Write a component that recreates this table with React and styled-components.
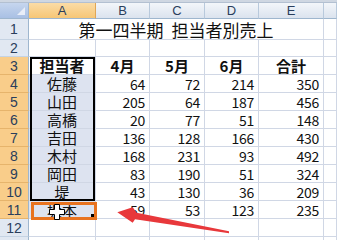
import React from "react";
import styled, { createGlobalStyle } from "styled-components";

const GlobalStyle = createGlobalStyle`
  html, body {
    margin: 0;
    padding: 0;
    background: #fff;
  }
  body {
    font-family: "Noto Sans CJK JP", "Liberation Sans", sans-serif;
  }
`;

const StyledSheet = styled.div`
  position: relative;
  width: 337px;
  height: 240px;
  overflow: hidden;
  background: #fff;
`;

const StyledTopStrip = styled.div`
  height: 3px;
  background: #cfd7e2;
  border-bottom: 1px solid #b3c0d1;
  box-sizing: border-box;
`;

const StyledGrid = styled.div`
  display: grid;
  grid-template-columns: 29px 67px 54px 55px 54px 65px 1fr;
  grid-template-rows: 16px 21px 17px repeat(11, 18px);
`;

const StyledCorner = styled.div`
  grid-row: 1;
  grid-column: 1;
  position: relative;
  background: linear-gradient(#c6d6ee, #a9c0e4);
  border-right: 1px solid #9eb6ce;
  border-bottom: 1px solid #9eb6ce;
  box-sizing: border-box;

  &::after {
    content: "";
    position: absolute;
    right: 3px;
    bottom: 3px;
    border-left: 8px solid transparent;
    border-bottom: 8px solid #e8eef8;
  }
`;

const StyledColHeader = styled.div`
  grid-row: 1;
  grid-column: ${(p) => p.$c};
  display: flex;
  align-items: center;
  justify-content: center;
  box-sizing: border-box;
  border-right: 1px solid ${(p) => (p.$active ? "#e0a656" : "#b8c9dc")};
  border-bottom: 1px solid #9eb6ce;
  background: ${(p) =>
    p.$active
      ? "linear-gradient(#fbdca6, #f6c676)"
      : "linear-gradient(#f3f6fa, #dbe3ee)"};
  font-family: "Liberation Sans", sans-serif;
  font-size: 13px;
  color: #2a3e5c;
`;

const StyledRowHeader = styled.div`
  grid-row: ${(p) => p.$r};
  grid-column: 1;
  display: flex;
  align-items: center;
  justify-content: center;
  box-sizing: border-box;
  border-right: 1px solid #9eb6ce;
  border-bottom: 1px solid ${(p) => (p.$active ? "#e6b46c" : "#c5d3e3")};
  background: ${(p) => (p.$active ? "#f9cd8a" : "#e1e8f2")};
  font-family: "Liberation Sans", sans-serif;
  font-size: 14px;
  color: #2a3e5c;
`;

const StyledCell = styled.div`
  grid-row: ${(p) => p.$r};
  grid-column: ${(p) => p.$c};
  display: flex;
  align-items: center;
  justify-content: ${(p) => (p.$align === "right" ? "flex-end" : "center")};
  padding: 0 4px;
  box-sizing: border-box;
  border-right: 1px solid #d0d7e5;
  border-bottom: 1px solid #d0d7e5;
  background: ${(p) => (p.$fill ? "#dde3f0" : "#fff")};
  font-size: ${(p) => (p.$num ? "14px" : "15px")};
  font-weight: ${(p) => (p.$bold ? 700 : 400)};
  letter-spacing: ${(p) => (p.$num ? "-0.3px" : "0")};
  color: #111;
  white-space: nowrap;
`;

const StyledTitle = styled(StyledCell)`
  grid-column: 2 / 7;
  font-size: 17px;
  word-spacing: 4px;
  padding-top: 1px;
`;

const StyledRangeOutline = styled.div`
  grid-column: 2;
  grid-row: 4 / 12;
  margin: 0 1px 0 1px;
  border: 2px solid #000;
  pointer-events: none;
  z-index: 1;
`;

const StyledMark = styled.div`
  position: relative;
  grid-column: 2;
  grid-row: 12;
  margin: 1px -1px -1px 2px;
  border: 3px solid #e8731f;
  z-index: 2;
`;

const StyledHandle = styled.span`
  position: absolute;
  right: 0;
  bottom: 0;
  width: 3px;
  height: 3px;
  background: #000;
`;

const StyledCursor = styled.svg`
  position: absolute;
  left: 49px;
  top: 203px;
  z-index: 3;
`;

const StyledArrow = styled.svg`
  position: absolute;
  left: 110px;
  top: 200px;
  z-index: 4;
`;

const columns = ["A", "B", "C", "D", "E", ""];

const rows = [
  ["佐藤", 64, 72, 214, 350],
  ["山田", 205, 64, 187, 456],
  ["高橋", 20, 77, 51, 148],
  ["吉田", 136, 128, 166, 430],
  ["木村", 168, 231, 93, 492],
  ["岡田", 83, 190, 51, 324],
  ["堤", 43, 130, 36, 209],
  ["坂本", 59, 53, 123, 235],
];

const headings = ["担当者", "4月", "5月", "6月", "合計"];

// grid row = sheet row + 1 (row 1 of the grid is the column header)
function EmptyRow({ num, label = true }) {
  const r = num + 1;
  return (
    <>
      <StyledRowHeader $r={r}>{label ? num : null}</StyledRowHeader>
      {columns.map((c, i) => (
        <StyledCell key={i} $r={r} $c={i + 2} />
      ))}
    </>
  );
}

function App() {
  return (
    <StyledSheet>
      <GlobalStyle />
      <StyledTopStrip />
      <StyledGrid>
        <StyledCorner />
        {columns.map((c, i) => (
          <StyledColHeader key={i} $c={i + 2} $active={c === "A"}>
            {c}
          </StyledColHeader>
        ))}

        <StyledRowHeader $r={2}>1</StyledRowHeader>
        <StyledTitle $r={2}>第一四半期 担当者別売上</StyledTitle>
        <StyledCell $r={2} $c={7} />

        <EmptyRow num={2} />

        <StyledRowHeader $r={4} $active>
          3
        </StyledRowHeader>
        {headings.map((h, i) => (
          <StyledCell key={h} $r={4} $c={i + 2} $bold>
            {h}
          </StyledCell>
        ))}
        <StyledCell $r={4} $c={7} />

        {rows.map(([name, ...nums], i) => {
          const r = i + 5;
          return (
            <React.Fragment key={name}>
              <StyledRowHeader $r={r} $active>
                {i + 4}
              </StyledRowHeader>
              <StyledCell $r={r} $c={2} $fill>
                {name}
              </StyledCell>
              {nums.map((n, j) => (
                <StyledCell key={j} $r={r} $c={j + 3} $align="right" $num>
                  {n}
                </StyledCell>
              ))}
              <StyledCell $r={r} $c={7} />
            </React.Fragment>
          );
        })}

        <EmptyRow num={12} />
        <EmptyRow num={13} label={false} />

        <StyledRangeOutline />
        <StyledMark>
          <StyledHandle />
        </StyledMark>
      </StyledGrid>

      <StyledCursor width="17" height="18" viewBox="0 0 17 18">
        <path
          d="M5.5 1.5h5v5h5v5h-5v5h-5v-5h-5v-5h5z"
          fill="#fff"
          stroke="#000"
          strokeWidth="1"
        />
      </StyledCursor>

      <StyledArrow width="125" height="40" viewBox="110 200 125 40">
        <polygon
          points="117.3,212.3 132.7,207.3 136.7,212.7 229,231.3 229,233.3 135,219.3 132.7,222.7"
          fill="#e8383b"
        />
      </StyledArrow>
    </StyledSheet>
  );
}

export default App;
